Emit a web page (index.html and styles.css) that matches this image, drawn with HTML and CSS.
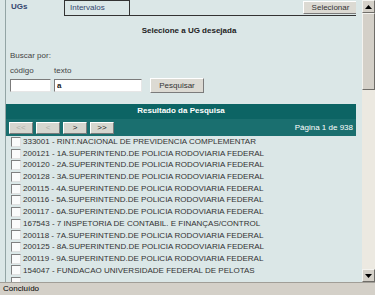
FILE: index.html
```html
<!DOCTYPE html>
<html lang="pt">

<head>
  <meta charset="UTF-8">
  <title>Selecione a UG</title>
  <link rel="stylesheet" href="styles.css">
</head>

<body>
  <div class="window">
    <div class="viewport">
      <div class="page">
        <div class="tabbar">
          <div class="tab active">UGs</div>
          <div class="tab">Intervalos</div>
          <div class="tab-fill">
            <button class="btn btn-sel">Selecionar</button>
          </div>
        </div>
        <div class="panel">
          <div class="title">Selecione a UG desejada</div>
          <div class="search">
            <div class="lbl">Buscar por:</div>
            <div class="fields">
              <div class="field">
                <div class="lbl">código</div>
                <input type="text" class="inp inp-cod">
              </div>
              <div class="field">
                <div class="lbl">texto</div>
                <input type="text" class="inp inp-txt" value="a">
              </div>
              <button class="btn btn-pesq">Pesquisar</button>
            </div>
          </div>
          <div class="result-head">Resultado da Pesquisa</div>
          <div class="pager">
            <button class="btn pg off">&lt;&lt;</button>
            <button class="btn pg off">&lt;</button>
            <button class="btn pg">&gt;</button>
            <button class="btn pg">&gt;&gt;</button>
            <span class="pg-info">Página 1 de 938</span>
          </div>
          <ul class="list">
            <li><span class="chk"></span>333001 - RINT.NACIONAL DE PREVIDENCIA COMPLEMENTAR</li>
            <li><span class="chk"></span>200121 - 1A.SUPERINTEND.DE POLICIA RODOVIARIA FEDERAL</li>
            <li><span class="chk"></span>200120 - 2A.SUPERINTEND.DE POLICIA RODOVIARIA FEDERAL</li>
            <li><span class="chk"></span>200128 - 3A.SUPERINTEND.DE POLICIA RODOVIARIA FEDERAL</li>
            <li><span class="chk"></span>200115 - 4A.SUPERINTEND.DE POLICIA RODOVIARIA FEDERAL</li>
            <li><span class="chk"></span>200116 - 5A.SUPERINTEND.DE POLICIA RODOVIARIA FEDERAL</li>
            <li><span class="chk"></span>200117 - 6A.SUPERINTEND.DE POLICIA RODOVIARIA FEDERAL</li>
            <li><span class="chk"></span>167543 - 7 INSPETORIA DE CONTABIL. E FINANÇAS/CONTROL</li>
            <li><span class="chk"></span>200118 - 7A.SUPERINTEND.DE POLICIA RODOVIARIA FEDERAL</li>
            <li><span class="chk"></span>200125 - 8A.SUPERINTEND.DE POLICIA RODOVIARIA FEDERAL</li>
            <li><span class="chk"></span>200119 - 9A.SUPERINTEND.DE POLICIA RODOVIARIA FEDERAL</li>
            <li><span class="chk"></span>154047 - FUNDACAO UNIVERSIDADE FEDERAL DE PELOTAS</li>
            <li><span class="chk"></span></li>
          </ul>
        </div>
      </div>
      <div class="scrollbar">
        <div class="sb-btn">
          <svg width="7" height="4" viewBox="0 0 7 4"><path d="M3.5 0 L7 4 L0 4 Z" fill="#000"/></svg>
        </div>
        <div class="sb-thumb"></div>
        <div class="sb-track"></div>
        <div class="sb-btn">
          <svg width="7" height="4" viewBox="0 0 7 4"><path d="M0 0 L7 0 L3.5 4 Z" fill="#000"/></svg>
        </div>
      </div>
    </div>
    <div class="status">Concluído</div>
  </div>
</body>

</html>
```

FILE: styles.css
```css
* {
  box-sizing: border-box;
}

body {
  margin: 0;
  font-family: "Liberation Sans", Arial, sans-serif;
  font-size: 8px;
  color: #333;
}

.window {
  width: 375px;
  height: 295px;
  display: flex;
  flex-direction: column;
  overflow: hidden;
}

.viewport {
  height: 282px;
  display: flex;
  overflow: hidden;
  background: #dbe7e7;
}

.page {
  flex: 1;
  padding-left: 5px;
  overflow: hidden;
}

/* abas */
.tabbar {
  display: flex;
  height: 16px;
  width: 352px;
}

.tab {
  height: 16px;
  line-height: 14px;
  padding-left: 5px;
  color: #34466e;
  border-right: 1px solid #333;
}

.tab.active {
  width: 60px;
  font-weight: bold;
  border-left: 1px solid #93a5a5;
}

.tab:not(.active) {
  width: 65px;
  border-top: 1px solid #333;
  border-bottom: 1px solid #333;
  line-height: 13px;
}

.tab-fill {
  flex: 1;
  border-bottom: 1px solid #333;
  border-right: 1px solid #333;
  display: flex;
  justify-content: flex-end;
  align-items: flex-start;
  margin-right: -1px;
}

.btn {
  font-family: inherit;
  font-size: 8px;
  color: #333;
  background: #dcdad3;
  border: 1px solid;
  border-color: #fff #7b7b7b #7b7b7b #fff;
  padding: 0;
  margin: 0;
}

.btn-sel {
  width: 55px;
  height: 13px;
  margin-top: 1px;
  margin-right: -1px;
}

/* painel */
.panel {
  width: 352px;
  border-left: 1px solid #93a5a5;
  border-right: 1px solid #333;
  padding-top: 10px;
}

.title {
  text-align: center;
  font-weight: bold;
  line-height: 10px;
  color: #222;
  padding-left: 16px;
}

.search {
  padding: 15px 0 0 4px;
}

.lbl {
  line-height: 10px;
  color: #444;
}

.fields {
  display: flex;
  align-items: flex-end;
  margin-top: 5px;
  height: 26px;
}

.field {
  margin-right: 3px;
}

.field .lbl {
  margin-bottom: 3px;
}

.inp {
  display: block;
  height: 13px;
  border: 1px solid;
  border-color: #7b7b7b #e6e6e6 #e6e6e6 #7b7b7b;
  background: #fff;
  font-family: inherit;
  font-size: 8px;
  font-weight: bold;
  color: #222;
  padding: 0 2px;
  margin: 0;
}

.inp-cod {
  width: 41px;
}

.inp-txt {
  width: 88px;
}

.btn-pesq {
  width: 54px;
  height: 15px;
  margin-left: 5px;
  margin-bottom: -1px;
}

/* resultado */
.result-head {
  margin-top: 12px;
  height: 15px;
  line-height: 14px;
  background: #0c6464;
  color: #fff;
  font-weight: bold;
  text-align: center;
}

.pager {
  height: 17px;
  background: #1a6f6f;
  display: flex;
  align-items: center;
  padding: 0 3px 0 3px;
  gap: 3px;
}

.pg {
  width: 24px;
  height: 12px;
  background: #d6d6cf;
  color: #222;
  line-height: 10px;
}

.pg.off {
  color: #b0b0aa;
}

.pg-info {
  margin-left: auto;
  color: #fff;
}

.list {
  list-style: none;
  margin: 0;
  padding: 0 0 0 5px;
}

.list li {
  height: 11.7px;
  line-height: 11.7px;
  display: flex;
  align-items: center;
  white-space: nowrap;
}

.chk {
  width: 10px;
  height: 10px;
  margin-right: 2px;
  background: #fbfbfb;
  border: 1px solid;
  border-color: #808080 #e0e0e0 #e0e0e0 #808080;
  flex: none;
}

/* barra de rolagem falsa */
.scrollbar {
  width: 13px;
  margin-left: 6px;
  display: flex;
  flex-direction: column;
  background: #ece9e1;
}

.sb-btn {
  height: 13px;
  background: #d4d0c8;
  border: 1px solid;
  border-color: #f4f3ef #6f6d68 #6f6d68 #f4f3ef;
  display: flex;
  align-items: center;
  justify-content: center;
}

.sb-thumb {
  height: 77px;
  background: #d4d0c8;
  border: 1px solid;
  border-color: #f4f3ef #6f6d68 #6f6d68 #f4f3ef;
}

.sb-track {
  flex: 1;
}

.status {
  height: 13px;
  background: #d4d0c8;
  border-top: 1px solid #a19e97;
  padding-left: 3px;
  line-height: 12px;
  font-size: 8px;
  color: #000;
}
```
